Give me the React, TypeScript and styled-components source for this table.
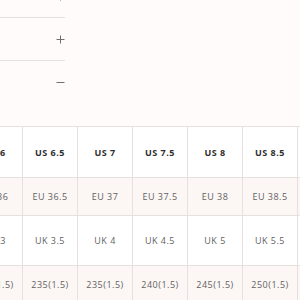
import React from "react";
import styled, { createGlobalStyle } from "styled-components";

const Global = createGlobalStyle`
  html, body { margin: 0; padding: 0; background: #fffbfa; }
  body { width: 300px; height: 300px; overflow: hidden; font-family: "Open Sans", "Lato", sans-serif; }
`;

const Page = styled.div`
  width: 300px;
  height: 300px;
  overflow: hidden;
  background: #fffbfa;
`;

const Accordion = styled.div`
  width: 265px;
  margin-left: -200px;
  margin-top: -25px;
`;

const Item = styled.div<{ $open?: boolean }>`
  display: flex;
  align-items: center;
  justify-content: flex-end;
  height: 42px;
  border-bottom: ${(p) => (p.$open ? "none" : "1px solid #e6e1df")};
`;

const Icon = styled.svg`
  width: 9px;
  height: 9px;
  flex: none;
`;

const Spacer = styled.div`
  height: 23px;
`;

const TableWrap = styled.div`
  margin-left: -33px;
  width: 420px;
`;

const Table = styled.table`
  border-collapse: collapse;
  table-layout: fixed;
  border-top: 1px solid #e6e1df;
`;

const Row = styled.tr<{ $tint?: boolean; $h: number }>`
  background: ${(p) => (p.$tint ? "#fcf6f4" : "#ffffff")};
  height: ${(p) => p.$h}px;
`;

const Cell = styled.td<{ $head?: boolean }>`
  width: 54px;
  min-width: 54px;
  max-width: 54px;
  padding: 0;
  border: 1px solid #e6e1df;
  border-top: none;
  text-align: center;
  vertical-align: middle;
  font-size: 9px;
  letter-spacing: 0.5px;
  white-space: nowrap;
  color: ${(p) => (p.$head ? "#2e2e2e" : "#626262")};
  font-weight: ${(p) => (p.$head ? 700 : 400)};
`;

const Plus = () => (
  <Icon viewBox="0 0 9 9">
    <path d="M4.5 0.5v8M0.5 4.5h8" stroke="#707070" strokeWidth="1" fill="none" />
  </Icon>
);

const Minus = () => (
  <Icon viewBox="0 0 9 9">
    <path d="M0.5 4.5h8" stroke="#707070" strokeWidth="1" fill="none" />
  </Icon>
);

const us = ["US 6", "US 6.5", "US 7", "US 7.5", "US 8", "US 8.5", "US 9"];
const eu = ["EU 36", "EU 36.5", "EU 37", "EU 37.5", "EU 38", "EU 38.5", "EU 39"];
const uk = ["UK 3", "UK 3.5", "UK 4", "UK 4.5", "UK 5", "UK 5.5", "UK 6"];
const mm = ["230(1.5)", "235(1.5)", "235(1.5)", "240(1.5)", "245(1.5)", "250(1.5)", "255(1.5)"];

export default function App() {
  return (
    <Page>
      <Global />
      <Accordion>
        <Item>
          <Plus />
        </Item>
        <Item>
          <Plus />
        </Item>
        <Item $open>
          <Minus />
        </Item>
      </Accordion>
      <Spacer />
      <TableWrap>
        <Table>
          <tbody>
            <Row $h={51}>
              {us.map((t) => (
                <Cell key={t} $head>{t}</Cell>
              ))}
            </Row>
            <Row $h={38} $tint>
              {eu.map((t) => (
                <Cell key={t}>{t}</Cell>
              ))}
            </Row>
            <Row $h={50}>
              {uk.map((t) => (
                <Cell key={t}>{t}</Cell>
              ))}
            </Row>
            <Row $h={38} $tint>
              {mm.map((t, i) => (
                <Cell key={i}>{t}</Cell>
              ))}
            </Row>
          </tbody>
        </Table>
      </TableWrap>
    </Page>
  );
}
